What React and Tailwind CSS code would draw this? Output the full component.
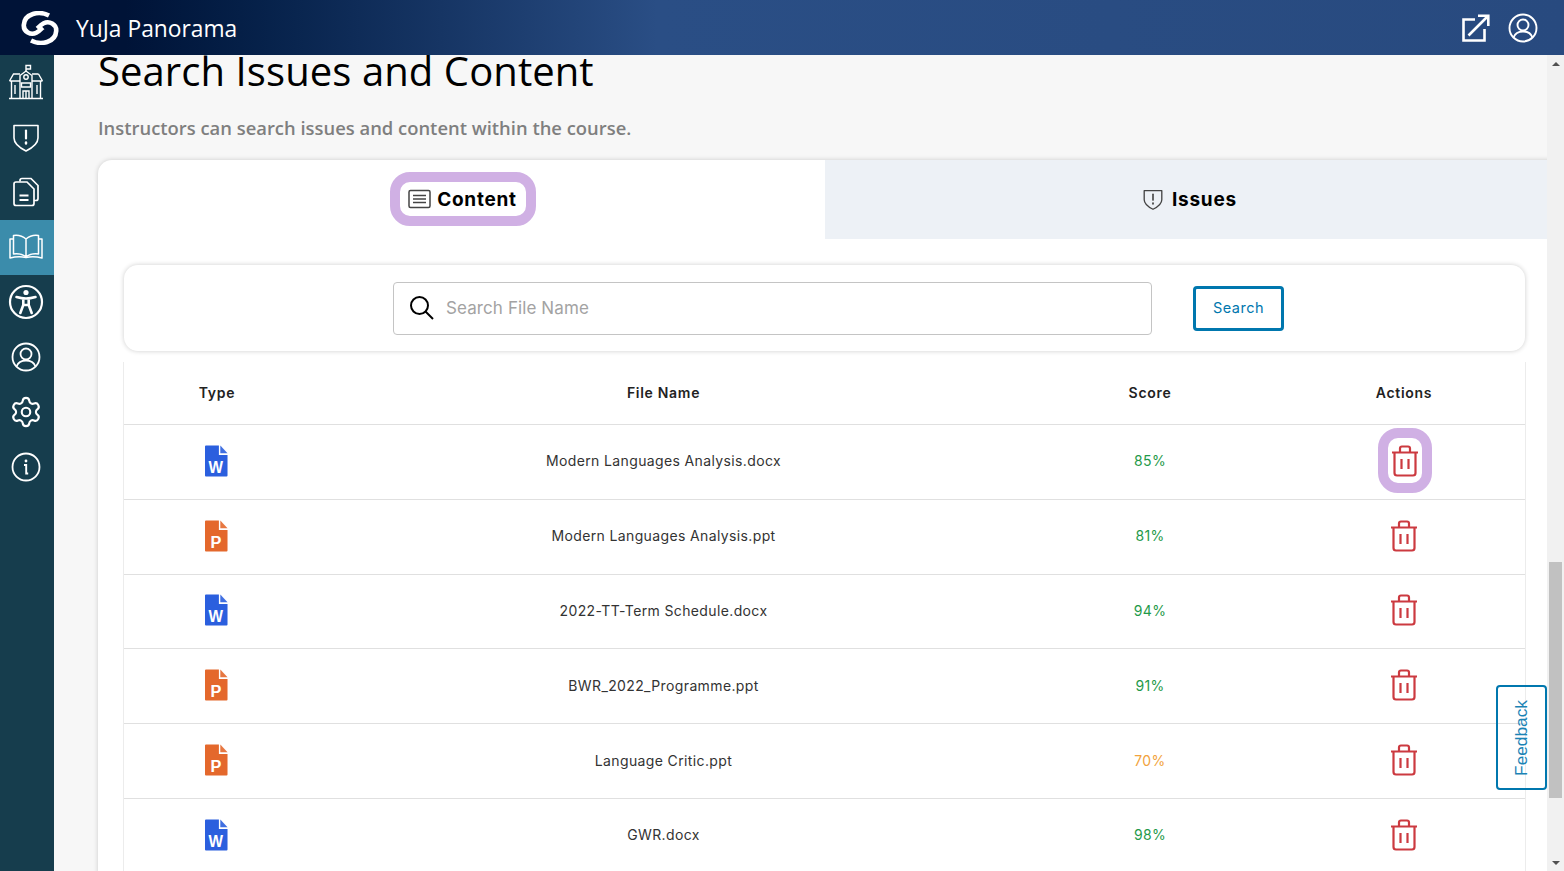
import React from "react";
import { Settings } from "lucide-react";

const side = "fill-none stroke-white";

function School() {
  return (
    <svg width="36" height="36" viewBox="0 0 36 36" className={side} strokeWidth="1.4">
      <path d="M1 34.5h34M3.5 34V17M32.5 34V17M1.5 17L5.5 10H12M30.5 10L34.5 17M24 10h6.5M1.5 17H12M24 17h10.5" />
      <path d="M12 34V11.5L18 7l6 4.5V34" />
      <path d="M18 7V1.5h4.5v3.5H18" />
      <circle cx="18" cy="13" r="2.2" />
      <path d="M13.5 19h9v4h-9zM15 34v-7h6v7M18 27v7M7 21v9M29 21v9" />
    </svg>
  );
}
function Shield({ size = 30, cls = side, sw = 1.6 }) {
  return (
    <svg width={size} height={size} viewBox="0 0 30 30" className={cls} strokeWidth={sw}>
      <path d="M3 3.5h24V16c0 6-5 9.5-12 13C8 25.500 3 22 3 16z" strokeLinejoin="round" />
      <path d="M15 8.500v8" strokeWidth="2.200" strokeLinecap="round" />
      <path d="M15 20.500v1" strokeWidth="2.400" strokeLinecap="round" />
    </svg>
  );
}
function Docs() {
  return (
    <svg width="28" height="30" viewBox="0 0 28 30" className={side} strokeWidth="1.700">
      <path d="M8 4.500V3.500A2 2 0 0 1 10 1.500h9l7 7v13a2 2 0 0 1-2 2h-2" />
      <path d="M4 5h11l7 7v14.500a2 2 0 0 1-2 2H4a2 2 0 0 1-2-2V7a2 2 0 0 1 2-2z" />
      <path d="M7.500 18.500h9M7.500 23h9" strokeWidth="1.900" />
    </svg>
  );
}
function Book() {
  return (
    <svg width="34" height="26" viewBox="0 0 34 26" className={side} strokeWidth="1.500">
      <path d="M17 5C13 1.500 8 1 4.500 1.500V20c4.500-.5 9 0 12.500 3 3.500-3 8-3.500 12.500-3V1.500C26 1 21 1.500 17 5zM17 5v18" strokeLinejoin="round" />
      <path d="M4.500 5H1v19c6-1.500 11-1.500 16-.5 5-1 10-1 16 .5V5h-3.500" strokeLinejoin="round" />
    </svg>
  );
}
function Access() {
  return (
    <svg width="36" height="36" viewBox="0 0 36 36" className="fill-none stroke-white" strokeWidth="2.200">
      <circle cx="18" cy="18" r="16" />
      <circle cx="18" cy="8.500" r="2.600" className="fill-white stroke-none" />
      <path d="M8.500 13c3.500 1 6.500 1.500 9.500 1.500s6-.5 9.500-1.500M15.300 15v6l-3 8M20.700 15v6l3 8M15.300 21h5.400" strokeWidth="2.600" strokeLinecap="round" strokeLinejoin="round" />
    </svg>
  );
}
function User({ size = 30, sw = 1.800 }) {
  return (
    <svg width={size} height={size} viewBox="0 0 30 30" className={side} strokeWidth={sw}>
      <circle cx="15" cy="15" r="13.500" />
      <circle cx="15" cy="12" r="5.500" />
      <path d="M5.500 24.500c1.500-4 5-6 9.500-6s8 2 9.500 6" />
    </svg>
  );
}
function Info() {
  return (
    <svg width="30" height="30" viewBox="0 0 30 30" className={side} strokeWidth="1.800">
      <circle cx="15" cy="15" r="13.500" />
      <circle cx="15" cy="9" r="1.400" className="fill-white stroke-none" />
      <path d="M13 13h2.200v8.500h2" strokeWidth="1.900" />
    </svg>
  );
}
function Logo() {
  return (
    <svg width="38" height="34" viewBox="0 0 38 34" className="fill-none stroke-white">
      <path d="M28 4.500C18-.5 3.500 2.500 2.800 14c-.4 7 7 10.500 12.500 7.800 2.500-1.200 4-2.800 6.500-5.300" strokeWidth="4.600" />
      <path d="M10 29.500c10 5 24.500 2 25.200-9.500.4-7-7-10.500-12.500-7.800-2.500 1.200-4 2.800-6.500 5.300" strokeWidth="4.600" />
    </svg>
  );
}
function Trash() {
  return (
    <svg width="28" height="32" viewBox="0 0 28 32" className="-mt-[2px] fill-none stroke-[#cc3a40]" strokeWidth="2.200">
      <path d="M1 7.500h26M9 7V3.500A2 2 0 0 1 11 1.500h6a2 2 0 0 1 2 2V7" />
      <path d="M3.500 7.500V28a2.500 2.500 0 0 0 2.500 2.500h16a2.500 2.500 0 0 0 2.500-2.500V7.500" />
      <path d="M10.500 14v10M17.500 14v10" />
    </svg>
  );
}
function FileIcon({ kind }) {
  const c = kind === "W" ? "#2b5fde" : "#e4682c";
  return (
    <svg width="23" height="32" viewBox="0 0 24 32" className="-mt-[2px] -ml-px" preserveAspectRatio="none">
      <path d="M1 .500h13.500V10h9v20.500a1 1 0 0 1-1 1H1a1 1 0 0 1-1-1V1.500a1 1 0 0 1 1-1z" fill={c} />
      <path d="M16 .500L23.500 8.300H16z" fill={c} opacity="0.9" />
      <text x="11.500" y="28" textAnchor="middle" fill="#fff" fontFamily="'Liberation Sans', sans-serif" fontWeight="700" fontSize={kind === "W" ? 16 : 17}>{kind}</text>
    </svg>
  );
}
function ContentIcon() {
  return (
    <svg width="23" height="20" viewBox="0 0 23 20" className="fill-none stroke-[#444]" strokeWidth="1.500">
      <rect x="1" y="1.500" width="21" height="17" rx="1.500" />
      <path d="M5 6.500h13M5 10h13M5 13.500h13" strokeWidth="1.300" />
    </svg>
  );
}

const items = [
  ["W", "Modern Languages Analysis.docx", "85%", "text-[#1f9a4a]"],
  ["P", "Modern Languages Analysis.ppt", "81%", "text-[#1f9a4a]"],
  ["W", "2022-TT-Term Schedule.docx", "94%", "text-[#1f9a4a]"],
  ["P", "BWR_2022_Programme.ppt", "91%", "text-[#1f9a4a]"],
  ["P", "Language Critic.ppt", "70%", "text-[#f2a33c]"],
  ["W", "GWR.docx", "98%", "text-[#1f9a4a]"],
];

const cols = "grid grid-cols-[186px_707px_266px_242px] items-center text-center";
const sans = "font-['Inter','Liberation_Sans',sans-serif]";
const segoe = "font-['Open_Sans','Noto_Sans',sans-serif]";

export default function App() {
  return (
    <div className={`flex h-[871px] w-full flex-col overflow-hidden bg-[#f7f7f7] ${sans}`}>
      <header className="flex h-[55px] shrink-0 items-center bg-gradient-to-r from-[#001337] from-[8%] via-[#2a4e85] via-[42%] to-[#284a7f] pr-[26px] pl-[21px]">
        <Logo />
        <span className={`mt-[3px] ml-[17px] text-[22.800px] text-white ${segoe}`}>YuJa Panorama</span>
        <div className="ml-auto flex items-center gap-[18px]">
          <svg width="28" height="28" viewBox="0 0 28 28" className="fill-none stroke-white" strokeWidth="2.600">
            <path d="M13 5.500H1.500v21h21V15" />
            <path d="M6.500 21.500L26 2M16 1.700h10.300V12" />
          </svg>
          <User size={30} sw={1.900} />
        </div>
      </header>
      <div className="flex min-h-0 flex-1">
        <nav className="flex w-[54px] shrink-0 flex-col bg-[#163d4d]">
          {[<School />, <Shield />, <Docs />, <Book />, <Access />, <User />, <Settings size={34} strokeWidth={1.500} color="#fff" />, <Info />].map((icon, i) => (
            <div key={i} className={`flex h-[55px] items-center justify-center pr-[3px] pb-[1px] ${i === 3 ? "bg-[#3b8cab]" : ""}`}>
              {icon}
            </div>
          ))}
        </nav>
        <main className="relative min-w-0 flex-1 overflow-hidden pl-[44px]">
          <h1 className={`-mt-[12px] h-[56px] text-[40px] leading-[56px] font-medium tracking-[0.08px] whitespace-nowrap text-black ${segoe}`}>Search Issues and Content</h1>
          <p className={`mt-[14px] h-[30px] text-[18.400px] leading-[30px] font-semibold text-[#7f7f7f] ${segoe}`}>Instructors can search issues and content within the course.</p>
          <section className="mt-[17px] w-[1470px] rounded-tl-[14px] bg-white shadow-[0_0_5px_rgba(0,0,0,0.18)]">
            <div className="flex h-[79px]">
              <div className="flex w-[727px] items-center justify-center pb-[2px]">
                <div className="ml-[3px] flex h-[54px] w-[146px] items-center justify-center gap-[6px] rounded-[20px] border-[10px] border-[#d0b0e4] bg-white">
                  <span className="-ml-[1px]"><ContentIcon /></span>
                  <span className="pt-[4px] text-[19px] font-bold tracking-[0.75px] text-black">Content</span>
                </div>
              </div>
              <div className="flex flex-1 items-center bg-[#edf1f6] pb-[2px] pl-[317px]">
                <div className="flex items-center gap-[8px]">
                  <Shield size={22} cls="fill-none stroke-[#444]" sw={1.800} />
                  <span className="pt-[4px] text-[19px] font-bold tracking-[0.75px] text-black">Issues</span>
                </div>
              </div>
            </div>
            <div className="pt-[26px] pl-[26px]">
              <div className="flex h-[86px] w-[1401px] items-center rounded-[14px] bg-white pl-[269px] shadow-[0_0_5px_rgba(0,0,0,0.2)]">
                <div className="flex h-[53px] w-[759px] items-center rounded-[4px] border border-[#c4c4c4] pb-[1px] pl-[15px]">
                  <svg width="25" height="25" viewBox="0 0 25 25" className="fill-none stroke-black" strokeWidth="2">
                    <circle cx="10.500" cy="10.500" r="8.500" />
                    <path d="M16.500 16.500l7.500 7.500" />
                  </svg>
                  <span className="ml-[12px] pt-[2px] text-[17px] tracking-[0.1px] text-[#a3a3a3]">Search File Name</span>
                </div>
                <button className="ml-[41px] h-[45px] w-[91px] rounded-[4px] border-[3px] border-[#0077ae] text-[14.500px] tracking-[0.5px] text-[#0077ae]">Search</button>
              </div>
              <div className="mt-[11px] -ml-px w-[1403px] border-r border-l border-[#ececec] bg-white">
                <div className={`${cols} h-[63px] border-b border-[#e0e0e0] pb-[2px] text-[14px] font-semibold tracking-[0.7px] text-[#222]`}>
                  <span>Type</span>
                  <span>File Name</span>
                  <span>Score</span>
                  <span>Actions</span>
                </div>
                {items.map(([kind, name, score, color], i) => (
                  <div key={name + i} className={`${cols} h-[74.800px] border-b border-[#e0e0e0] text-[14px] tracking-[0.37px] text-[#333]`}>
                    <div className="flex justify-center"><FileIcon kind={kind} /></div>
                    <span className="pb-[2px]">{name}</span>
                    <span className={`pb-[2px] ${color}`}>{score}</span>
                    <div className="flex justify-center">
                      {i === 0 ? (
                        <div className="-mt-[2px] ml-[2px] flex h-[65px] w-[54px] items-center justify-center rounded-[20px] border-[10px] border-[#d0b0e4] bg-white pt-[2px]">
                          <Trash />
                        </div>
                      ) : (
                        <Trash />
                      )}
                    </div>
                  </div>
                ))}
              </div>
            </div>
          </section>
          <button className="absolute top-[630px] right-0 flex h-[105px] w-[51px] items-center justify-center rounded-[4px] border-2 border-[#0077ae] bg-white/0 font-['Liberation_Sans',sans-serif] text-[17.300px] text-[#1b83b5]">
            <span className="rotate-180 [writing-mode:vertical-rl]">Feedback</span>
          </button>
        </main>
        <aside className="flex w-[17px] shrink-0 flex-col bg-[#f1f1f1]">
          <div className="flex h-[17px] items-center justify-center">
            <div className="h-0 w-0 border-r-[4px] border-b-[4px] border-l-[4px] border-r-transparent border-b-[#505050] border-l-transparent" />
          </div>
          <div className="mt-[490px] ml-[2px] h-[236px] w-[13px] bg-[#c1c1c1]" />
          <div className="mt-auto flex h-[17px] items-center justify-center">
            <div className="h-0 w-0 border-t-[4px] border-r-[4px] border-l-[4px] border-t-[#505050] border-r-transparent border-l-transparent" />
          </div>
        </aside>
      </div>
    </div>
  );
}
